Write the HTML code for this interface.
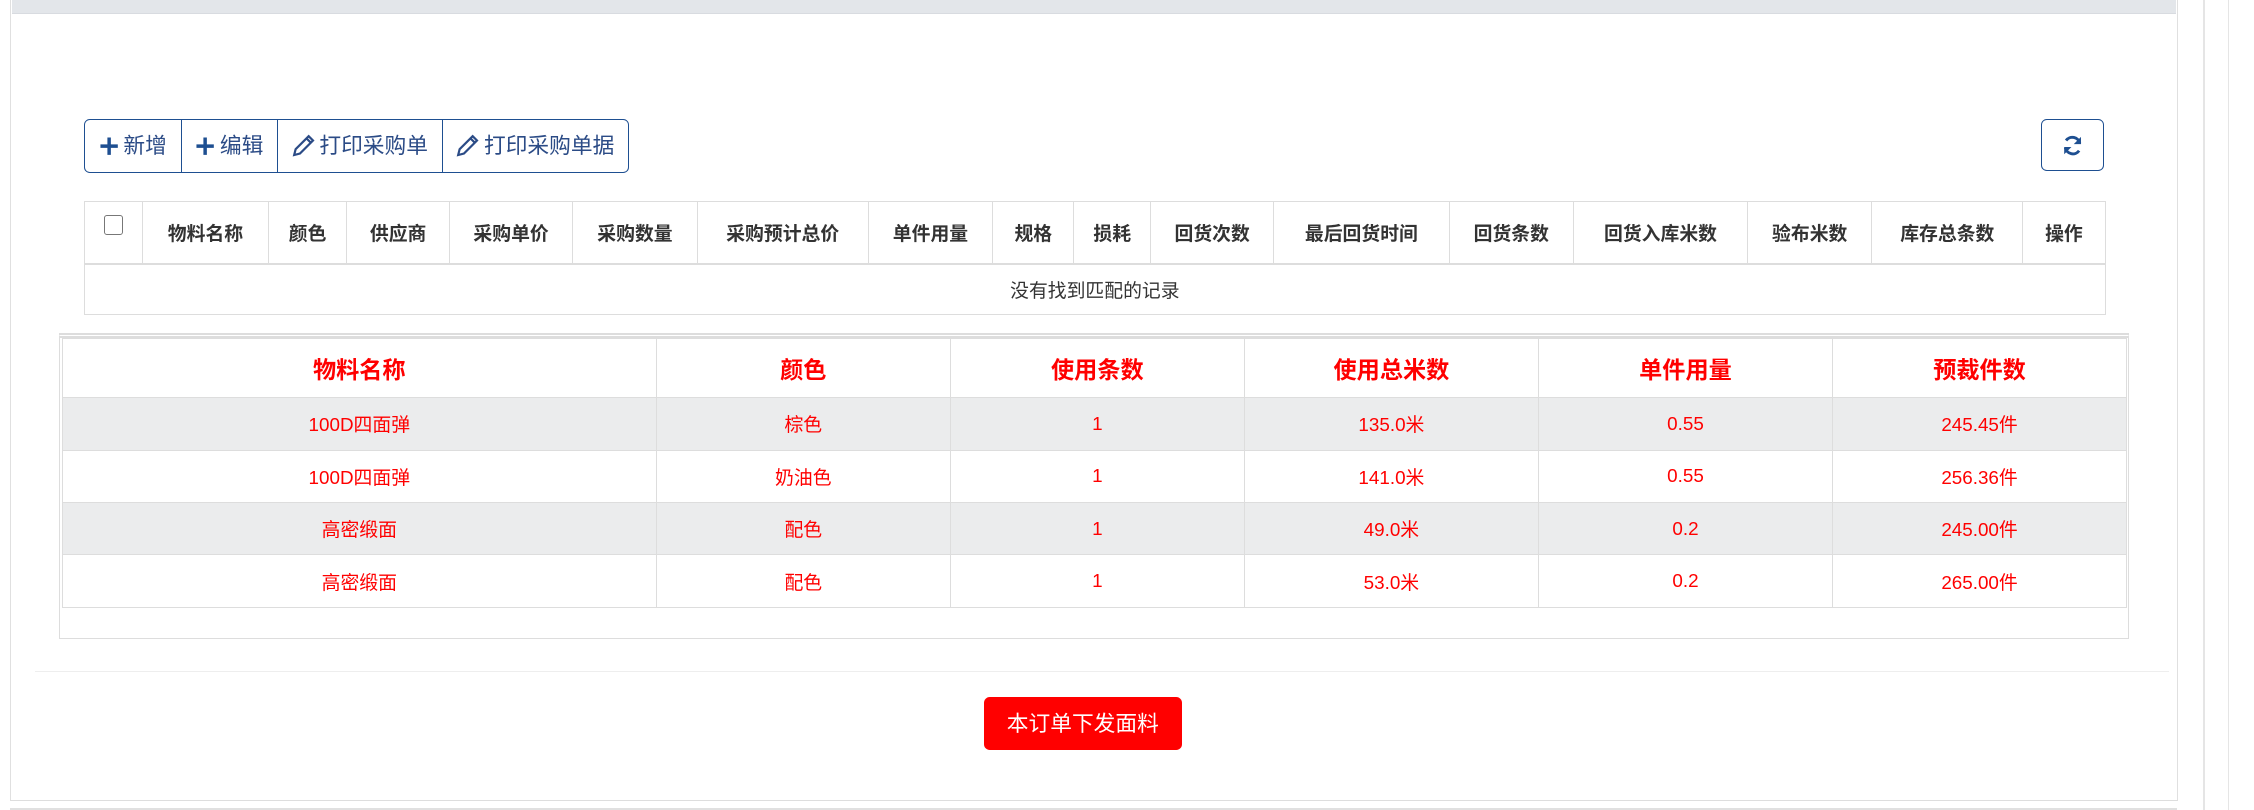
<!DOCTYPE html>
<html><head><meta charset="utf-8"><style>
html,body{margin:0;padding:0;background:#fff;overflow:hidden}
body{width:1556px;height:559px;zoom:1.4486;position:relative;font-family:"Liberation Sans","Noto Sans CJK SC",sans-serif}
.abs{position:absolute}
.topbar{left:8px;top:0;width:1494px;height:9px;background:#e3e6ea;border-bottom:1px solid #d8dbe0}
.panel{left:7px;top:0;width:1495px;height:552px;border-left:1px solid #e0e0e0;border-right:1px solid #e0e0e0;border-bottom:1px solid #ddd}
.vl{top:0;width:1px;height:559px;background:#e5e5e5}
.btns{left:58px;top:82px;height:36px;display:flex;border:1px solid #1e4f91;border-radius:4px;overflow:hidden}
.btns div{height:36px;line-height:36px;padding:0 9.5px;color:#2b4b86;font-size:15px;border-left:1px solid #1e4f91;display:flex;align-items:center;gap:3px}
.btns div:first-child{border-left:none}
.refresh{left:1409px;top:82px;width:42px;height:35px;border:1px solid #1e4f91;border-radius:4px;display:flex;align-items:center;justify-content:center}
table{border-collapse:collapse;table-layout:fixed}
.t1{position:absolute;left:58px;top:139px;width:1395px}
.t1 th{height:33px;border:1px solid #ddd;border-bottom:2px solid #ddd;font-size:13px;color:#333;font-weight:bold;padding:0;vertical-align:middle}
.t1 td{height:34px;padding:0;border:1px solid #ddd;text-align:center;font-size:13px;color:#333}
.wrap2{left:41px;top:230px;width:1427px;height:207px;border:1px solid #ddd;border-top:4px double #ddd}
.t2{position:absolute;left:1px;top:0;width:1425px}
.t2 th{height:40px;padding:0;border:1px solid #ddd;color:#f00;font-size:16px;font-weight:bold}
.t2 td{height:35.5px;padding:0;border:1px solid #ddd;color:#f00;font-size:13px;text-align:center}
.t2 tr.g td{background:#ebeced}
.hr{left:24px;top:463px;width:1473px;height:1px;background:#eee}
.red{left:679px;top:481px;width:137px;height:37px;background:#f00;color:#fff;border-radius:4px;font-size:15px;line-height:37px;text-align:center}
</style></head><body>
<div class="abs panel"></div>
<div class="abs topbar"></div>
<div class="abs vl" style="left:1521px"></div>
<div class="abs vl" style="left:1538px"></div>
<div class="abs" style="left:7px;top:558px;width:1496px;height:1px;background:#e0e0e0"></div>

<div class="abs btns">
<div><svg width="14" height="14" viewBox="0 0 14 14"><path d="M7 1v12M1 7h12" stroke="#1e4f91" stroke-width="2.4"/></svg>新增</div>
<div><svg width="14" height="14" viewBox="0 0 14 14"><path d="M7 1v12M1 7h12" stroke="#1e4f91" stroke-width="2.4"/></svg>编辑</div>
<div><svg width="16" height="16" viewBox="0 0 16 16"><path d="M11.5 1.5l3 3-9 9-4 1 1-4z M10 3l3 3" fill="none" stroke="#2b4b86" stroke-width="1.5"/></svg>打印采购单</div>
<div><svg width="16" height="16" viewBox="0 0 16 16"><path d="M11.5 1.5l3 3-9 9-4 1 1-4z M10 3l3 3" fill="none" stroke="#2b4b86" stroke-width="1.5"/></svg>打印采购单据</div>
</div>
<div class="abs refresh"><svg width="16" height="16" viewBox="0 0 16 16"><path d="M13 6.5A5.3 5.3 0 0 0 3.5 4.5M3 9.5a5.3 5.3 0 0 0 9.5 2" fill="none" stroke="#1e4f91" stroke-width="2"/><path d="M13.8 2v5h-5z M2.2 14V9h5z" fill="#1e4f91"/></svg></div>

<table class="t1">
<colgroup><col style="width:40px"><col style="width:87px"><col style="width:54px"><col style="width:71px"><col style="width:85px"><col style="width:86px"><col style="width:118px"><col style="width:86px"><col style="width:56px"><col style="width:53px"><col style="width:85px"><col style="width:121px"><col style="width:86px"><col style="width:120px"><col style="width:86px"><col style="width:104px"><col style="width:57px"></colgroup>
<tr><th style="vertical-align:top;padding-top:9px"><div style="width:12px;height:12px;border:1px solid #777;border-radius:2px;margin:0 auto"></div></th><th>物料名称</th><th>颜色</th><th>供应商</th><th>采购单价</th><th>采购数量</th><th>采购预计总价</th><th>单件用量</th><th>规格</th><th>损耗</th><th>回货次数</th><th>最后回货时间</th><th>回货条数</th><th>回货入库米数</th><th>验布米数</th><th>库存总条数</th><th>操作</th></tr>
<tr><td colspan="17">没有找到匹配的记录</td></tr>
</table>

<div class="abs wrap2">
<table class="t2">
<colgroup><col style="width:410px"><col style="width:203px"><col style="width:203px"><col style="width:203px"><col style="width:203px"><col style="width:203px"></colgroup>
<tr><th>物料名称</th><th>颜色</th><th>使用条数</th><th>使用总米数</th><th>单件用量</th><th>预裁件数</th></tr>
<tr class="g"><td>100D四面弹</td><td>棕色</td><td>1</td><td>135.0米</td><td>0.55</td><td>245.45件</td></tr>
<tr><td>100D四面弹</td><td>奶油色</td><td>1</td><td>141.0米</td><td>0.55</td><td>256.36件</td></tr>
<tr class="g"><td>高密缎面</td><td>配色</td><td>1</td><td>49.0米</td><td>0.2</td><td>245.00件</td></tr>
<tr><td>高密缎面</td><td>配色</td><td>1</td><td>53.0米</td><td>0.2</td><td>265.00件</td></tr>
</table>
</div>

<div class="abs hr"></div>
<div class="abs red">本订单下发面料</div>
</body></html>
